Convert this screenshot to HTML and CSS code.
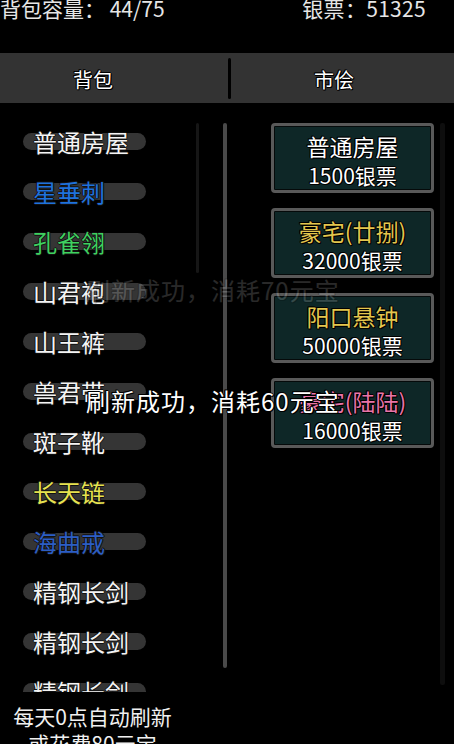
FILE: index.html
```html
<!DOCTYPE html>
<html lang="zh-CN">
<head>
    <meta charset="UTF-8">
    <meta name="viewport" content="width=device-width, initial-scale=1.0">
    <title>背包 - 市侩</title>
    <link rel="stylesheet" href="styles.css">
</head>
<body>
    <div class="top">
        <span>背包容量：&nbsp;44/75</span>
        <span class="money">银票：51325</span>
    </div>
    <div class="tabs">
        <div class="tab tab-bag">背包</div>
        <div class="sep"></div>
        <div class="tab tab-shop">市侩</div>
    </div>
    <div class="main">
        <div class="bag">
            <div class="items">
                <div class="item"><div class="pill">普通房屋</div></div>
                <div class="item"><div class="pill blue">星垂刺</div></div>
                <div class="item"><div class="pill green">孔雀翎</div></div>
                <div class="item"><div class="pill">山君袍</div></div>
                <div class="item"><div class="pill">山王裤</div></div>
                <div class="item"><div class="pill">兽君带</div></div>
                <div class="item"><div class="pill">斑子靴</div></div>
                <div class="item"><div class="pill yellow">长天链</div></div>
                <div class="item"><div class="pill navy">海曲戒</div></div>
                <div class="item"><div class="pill">精钢长剑</div></div>
                <div class="item"><div class="pill">精钢长剑</div></div>
                <div class="item"><div class="pill">精钢长剑</div></div>
            </div>
            <div class="thumb"></div>
            <div class="track"></div>
        </div>
        <div class="shop">
            <div class="cards">
                <div class="card">
                    <div class="name">普通房屋</div>
                    <div class="price">1500银票</div>
                </div>
                <div class="card">
                    <div class="name gold">豪宅(廿捌)</div>
                    <div class="price">32000银票</div>
                </div>
                <div class="card">
                    <div class="name gold">阳口悬钟</div>
                    <div class="price">50000银票</div>
                </div>
                <div class="card">
                    <div class="name pink">豪宅(陆陆)</div>
                    <div class="price">16000银票</div>
                </div>
            </div>
            <div class="shopbar"></div>
        </div>
    </div>
    <div class="foot">每天0点自动刷新<br>或花费80元宝</div>

    <div class="toast old">刷新成功，消耗70元宝</div>
    <div class="toast">刷新成功，消耗60元宝</div>
</body>
</html>
```

FILE: styles.css
```css
body {
    margin: 0;
    width: 454px;
    height: 744px;
    overflow: hidden;
    background-color: #000;
    color: #f2f2f2;
    font-family: "Noto Sans CJK SC", "Noto Sans", sans-serif;
    position: relative;
}
.top {
    height: 53px;
    display: flex;
    font-size: 21px;
    line-height: 21px;
    color: #e6e6e6;
}
.top span {
    margin-top: -2px;
}
.money {
    margin-left: auto;
    margin-right: 28px;
    letter-spacing: 0.3px;
}
.tabs {
    height: 50px;
    background-color: #333;
    display: flex;
    align-items: center;
}
.tab {
    font-size: 20px;
    color: #fff;
    text-align: center;
    text-shadow: -1px 0 #000, 1px 0 #000, 0 -1px #000, 0 1px #000, 1px 1px #000, -1px -1px #000;
    padding-top: 2px;
}
.tab-bag {
    width: 228px;
    padding-right: 42px;
    box-sizing: border-box;
}
.tab-shop {
    flex: 1;
    padding-right: 17px;
}
.sep {
    width: 3px;
    height: 41px;
    background-color: #000;
    border-radius: 2px;
}
.main {
    height: 589px;
    overflow: hidden;
    display: flex;
}
.bag {
    width: 229px;
    display: flex;
}
.items {
    width: 196px;
    padding-top: 13px;
}
.item {
    height: 50px;
    display: flex;
    align-items: center;
}
.pill {
    width: 123px;
    height: 17px;
    margin-left: 23px;
    margin-top: 1px;
    padding-left: 10px;
    box-sizing: border-box;
    border-radius: 9px;
    background-color: #353535;
    font-size: 24px;
    line-height: 17px;
    white-space: nowrap;
    color: #f4f4f4;
    text-shadow: -1px 0 #111, 1px 0 #111, 0 -1px #111, 0 1px #111;
}
.blue { color: #1f72dc; }
.green { color: #3fd160; }
.yellow { color: #e6e250; }
.navy { color: #2c5ec4; }
.thumb {
    width: 3px;
    height: 150px;
    margin-top: 20px;
    background-color: #161616;
    border-radius: 2px;
}
.track {
    width: 4px;
    height: 545px;
    margin-top: 20px;
    margin-left: 24px;
    background-color: #4a4a4a;
    border-radius: 2px;
}
.shop {
    flex: 1;
    display: flex;
}
.cards {
    width: 163px;
    padding: 20px 0 0 42px;
    display: flex;
    flex-direction: column;
    gap: 15px;
}
.card {
    height: 70px;
    box-sizing: border-box;
    border: 3px solid #595959;
    border-radius: 4px;
    background-color: #0e2727;
    box-shadow: inset 0 0 0 1px #050a0a;
    padding-top: 6px;
    text-align: center;
    text-shadow: -1px 0 #000, 1px 0 #000, 0 -1px #000, 0 1px #000, 1px 1px #000, -1px -1px #000;
}
.name {
    font-size: 23px;
    line-height: 28px;
    color: #fff;
}
.price {
    font-size: 21px;
    line-height: 30px;
    color: #fff;
}
.gold { color: #e3c64e; }
.pink { color: #e874a8; }
.shopbar {
    width: 5px;
    height: 562px;
    margin: 20px 0 0 6px;
    background-color: #0e0e0e;
    border-radius: 2px;
}
.foot {
    width: 185px;
    padding-top: 11px;
    font-size: 21px;
    line-height: 27px;
    text-align: center;
    color: #f0f0f0;
}
.toast {
    position: absolute;
    left: 86px;
    top: 386px;
    font-size: 24px;
    line-height: 30px;
    letter-spacing: 1px;
    white-space: nowrap;
    color: #fff;
    text-shadow: -1px 0 #000, 1px 0 #000, 0 -1px #000, 0 1px #000, 1px 1px #000, -1px -1px #000;
}
.toast.old {
    top: 275px;
    opacity: 0.16;
}
```
